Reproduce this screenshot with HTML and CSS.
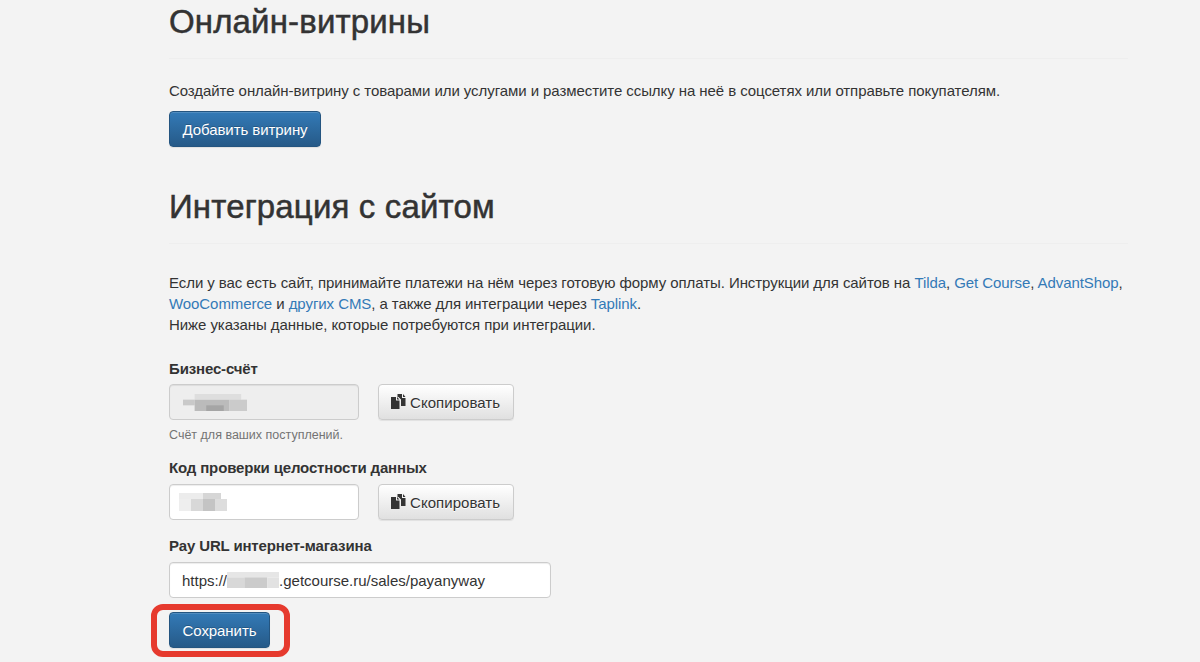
FILE: index.html
```html
<!DOCTYPE html>
<html lang="ru">
<head>
<meta charset="utf-8">
<title>Интеграция</title>
<link rel="stylesheet" href="styles.css">
</head>
<body>
<main class="page">
  <section class="first">
    <h1 class="title">Онлайн-витрины</h1>
    <p class="intro">Создайте онлайн-витрину с товарами или услугами и разместите ссылку на неё в соцсетях или отправьте покупателям.</p>
    <button class="btn primary wide">Добавить витрину</button>
  </section>
  <section class="second">
    <h1 class="title">Интеграция с сайтом</h1>
    <p class="lead">Если у вас есть сайт, принимайте платежи на нём через готовую форму оплаты. Инструкции для сайтов на <a href="#">Tilda</a>, <a href="#">Get Course</a>, <a href="#">AdvantShop</a>,<br><a href="#">WooCommerce</a> и <a href="#">других CMS</a>, а также для интеграции через <a href="#">Taplink</a>.<br>Ниже указаны данные, которые потребуются при интеграции.</p>
    <div class="field">
      <label class="label">Бизнес-счёт</label>
      <div class="row">
        <div class="input short disabled">
          <svg class="mosaic m1" width="64" height="17" viewBox="0 0 11 3" preserveAspectRatio="none" aria-hidden="true">
            <path fill="#dedede" d="M2 0h8v1H2z"/><path fill="#c9c9c9" d="M0 1h2v1H0z"/><path fill="#bbb" d="M2 1h6v2H2z"/><path fill="#a5a5a5" d="M4 2h3v1H4z"/><path fill="#cbcbcb" d="M8 1h3v2H8z"/>
          </svg>
        </div>
        <button class="btn plain">
          <svg class="copy" width="16" height="16" viewBox="0 0 16 16" aria-hidden="true"><path fill="#333" d="M0 3h5v3.5h3.5V15H0zM6 3l2.500 2.500H6z"/><path fill="#333" d="M6.500 0H11v4h3.500v8H10V5.500L7.500 3h-1zM12 0l2.500 3H12z"/></svg>
          Скопировать
        </button>
      </div>
      <div class="help">Счёт для ваших поступлений.</div>
    </div>
    <div class="field code">
      <label class="label low">Код проверки целостности данных</label>
      <div class="row">
        <div class="input short">
          <svg class="mosaic m2" width="48" height="18" viewBox="0 0 8 3" preserveAspectRatio="none" aria-hidden="true">
            <path fill="#ececec" d="M0 0h4v1H0z"/><path fill="#d6d6d6" d="M4 0h3v1H4z"/><path fill="#eee" d="M0 1h2v2H0z"/><path fill="#d8d8d8" d="M2 1h2v2H2z"/><path fill="#c4c4c4" d="M4 1h2v2H4z"/><path fill="#ddd" d="M6 1h2v2H6z"/>
          </svg>
        </div>
        <button class="btn plain">
          <svg class="copy" width="16" height="16" viewBox="0 0 16 16" aria-hidden="true"><path fill="#333" d="M0 3h5v3.500h3.500V15H0zM6 3l2.500 2.500H6z"/><path fill="#333" d="M6.500 0H11v4h3.500v8H10V5.500L7.500 3h-1zM12 0l2.500 3H12z"/></svg>
          Скопировать
        </button>
      </div>
    </div>
    <div class="field url">
      <label class="label low">Pay URL интернет-магазина</label>
      <div class="input long">https://<svg class="mosaic m3" width="52" height="16" viewBox="0 0 9 3" preserveAspectRatio="none" aria-hidden="true"><path fill="#e6e6e6" d="M0 0h9v1H0z"/><path fill="#d8d8d8" d="M0 1h3v2H0z"/><path fill="#cbcbcb" d="M3 1h4v2H3z"/><path fill="#e2e2e2" d="M7 1h2v2H7z"/></svg>.getcourse.ru/sales/payanyway</div>
    </div>
    <div class="save">
      <button class="btn primary narrow">Сохранить</button>
    </div>
  </section>
</main>
</body>
</html>
```
FILE: styles.css
```css
* { box-sizing: border-box; }
html, body { margin: 0; height: 662px; overflow: hidden; }
body {
  background: #f3f3f3;
  color: #333;
  font-family: "Liberation Sans", Arial, sans-serif;
  font-size: 15px;
  line-height: 21px;
  letter-spacing: -0.07px;
}
.page { width: 959px; margin-left: 169px; }
.first { padding-top: 3px; }
.title {
  margin: 0;
  height: 56px;
  padding-bottom: 17px;
  border-bottom: 1px solid #eeeeee;
  font-size: 33px;
  line-height: 38px;
  font-weight: 400;
  letter-spacing: 0.15px;
  -webkit-text-stroke: 0.5px #333;
}
.intro { margin: 21px 0 10px; }
.second { margin-top: 41px; }
.lead { margin: 28px 0 0; }
a { color: #337ab7; text-decoration: none; }
.field { margin-top: 23px; }
.field.code { margin-top: 13px; }
.field.url { margin-top: 15px; }
.label { display: block; font-weight: 700; margin-bottom: 5px; letter-spacing: -0.15px; }
.label.low { margin-bottom: 6px; }
.row { display: flex; gap: 19px; }
.input {
  height: 36px;
  display: flex;
  align-items: center;
  padding: 0 12px;
  background: #fff;
  border: 1px solid #ccc;
  border-radius: 4px;
  box-shadow: inset 0 1px 1px rgba(0, 0, 0, 0.075);
}
.short { width: 190px; }
.long { width: 382px; letter-spacing: 0; }
.disabled { background: #eeeeee; }
.mosaic { display: block; flex: none; filter: blur(0.6px); }
.m1 { margin-left: 1px; }
.m2 { margin-left: -3px; }
.help { margin-top: 7px; color: #737373; font-size: 12.5px; line-height: 17px; letter-spacing: 0; }
.btn {
  height: 36px;
  padding: 0 12px;
  border-radius: 4px;
  font: inherit;
  letter-spacing: inherit;
  white-space: nowrap;
  cursor: pointer;
}
.primary {
  color: #fff;
  border: 1px solid #245580;
  background: linear-gradient(#337ab7, #265a88);
  text-shadow: 0 -1px 0 rgba(0, 0, 0, 0.2);
  box-shadow: inset 0 1px 0 rgba(255, 255, 255, 0.15), 0 1px 1px rgba(0, 0, 0, 0.075);
}
.plain {
  display: flex;
  align-items: center;
  gap: 3px;
  width: 136px;
  color: #333;
  letter-spacing: 0.05px;
  border: 1px solid #ccc;
  background: linear-gradient(#fff, #e0e0e0);
  text-shadow: 0 1px 0 #fff;
  box-shadow: inset 0 1px 0 rgba(255, 255, 255, 0.15), 0 1px 1px rgba(0, 0, 0, 0.075);
}
.wide { width: 152px; }
.narrow { width: 101px; }
.save { position: relative; width: 101px; height: 36px; margin-top: 14px; }
.save::after {
  content: "";
  position: absolute;
  left: -18px;
  right: -20px;
  top: -8px;
  bottom: -9px;
  border: 6px solid #e63a2e;
  border-radius: 12px;
  pointer-events: none;
}
```
